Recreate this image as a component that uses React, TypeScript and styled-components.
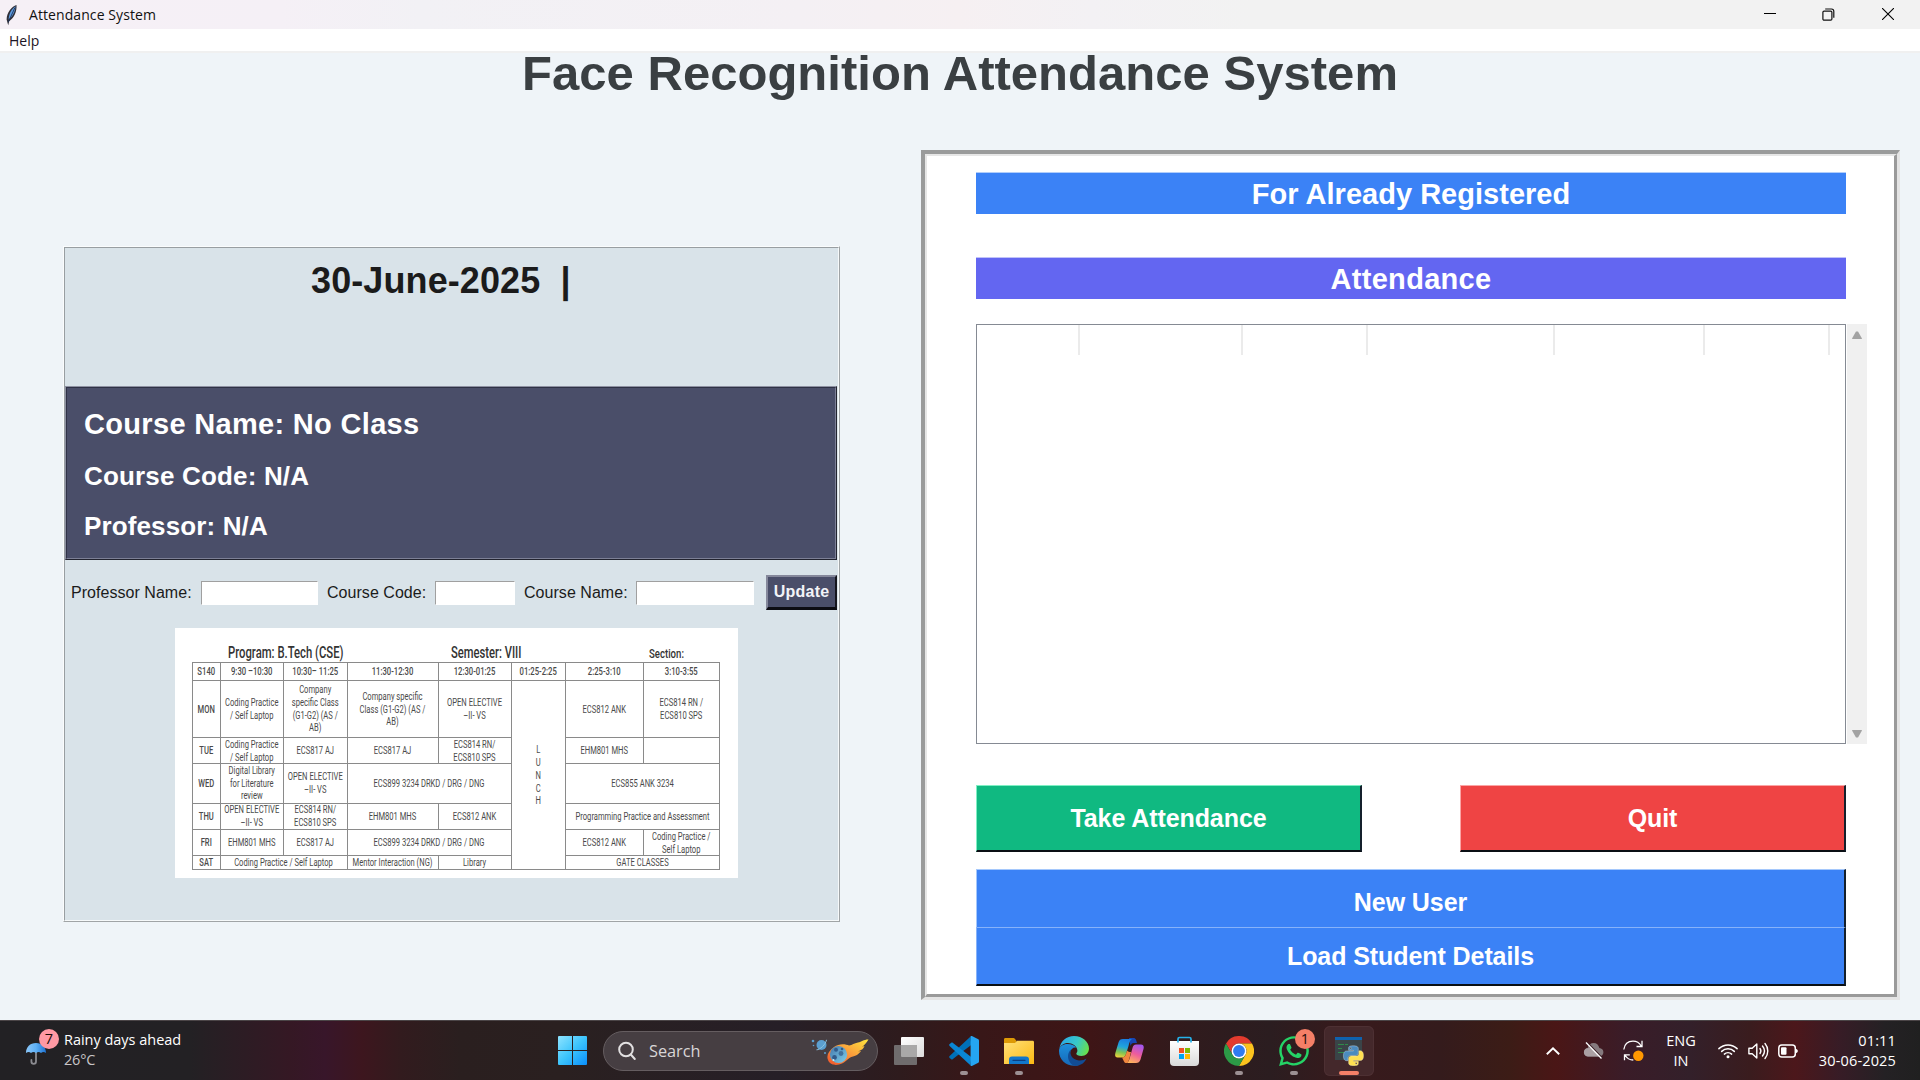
import React from "react";
import styled, { createGlobalStyle } from "styled-components";
import { FaWhatsapp } from "react-icons/fa";

const ARIAL = `"Liberation Sans", Arial, sans-serif`;
const SEGOE = `"Open Sans", "Noto Sans", sans-serif`;

const GlobalStyle = createGlobalStyle`
  * { box-sizing: border-box; }
  html, body { margin: 0; padding: 0; }
  body { background: #eff4f9; overflow: hidden; }
  button { margin: 0; padding: 0; }
`;

const Screen = styled.div`
  width: 1920px;
  height: 1080px;
  display: flex;
  flex-direction: column;
  overflow: hidden;
  background: #eff4f8;
  font-family: ${ARIAL};
`;

/* ---------- window chrome ---------- */

const TitleBar = styled.header`
  height: 29px;
  flex: none;
  display: flex;
  align-items: center;
  padding-left: 4px;
  background: linear-gradient(90deg, #f6f0f6 0, #f5f0f6 280px, #f2f1f5 420px, #f4f0f4 800px, #f6f0f2 960px, #f3f1f4 1090px, #f2f2f2 1250px);
`;

const WindowTitle = styled.span`
  flex: 1;
  margin-left: 10px;
  font: 400 14px/28px ${SEGOE};
  letter-spacing: 0.08px;
  color: #111;
`;

const WindowControls = styled.div`
  display: flex;
  height: 29px;
  padding-right: 1px;
`;

const ControlButton = styled.div<{ $w: number }>`
  width: ${(p) => p.$w}px;
  height: 28px;
  display: flex;
  align-items: center;
  justify-content: center;
`;

const MenuBar = styled.nav`
  height: 24px;
  flex: none;
  padding-left: 9px;
  background: #fff;
  border-bottom: 2px solid #f0f0f0;
  font: 400 14px/24px ${SEGOE};
  color: #1c1424;
`;

/* ---------- application body ---------- */

const Heading = styled.h1`
  margin: 0;
  height: 39px;
  flex: none;
  text-align: center;
  white-space: nowrap;
  font: 700 49px/40px ${ARIAL};
  letter-spacing: 0.03px;
  color: #3a3f42;
`;

const Body = styled.main`
  flex: 1;
  min-height: 0;
  display: flex;
  align-items: flex-start;
  padding: 58px 0 0 63px;
`;

const LeftPanel = styled.section`
  width: 777px;
  height: 676px;
  margin-top: 96px;
  border: 1px solid;
  border-color: #fafcfd #a0a4a6 #a0a4a6 #fafcfd;
`;

const LeftInner = styled.div`
  height: 100%;
  display: flex;
  flex-direction: column;
  padding-right: 1px;
  background: #d9e3e9;
  border: 1px solid;
  border-color: #989ea2 #f6f9fa #f6f9fa #989ea2;
`;

const DateLine = styled.div`
  height: 138px;
  padding-top: 12px;
  text-align: center;
  white-space: pre;
  font: 700 36px/42px ${ARIAL};
  letter-spacing: 0.1px;
  color: #1b1b1b;
`;

const CourseBox = styled.div`
  height: 174px;
  border: 1px solid;
  border-color: #8f92a3 #22232f #22232f #8f92a3;
`;

const CourseInner = styled.div`
  height: 100%;
  padding: 18px 0 0 17px;
  background: #4a4e69;
  border: 1px solid;
  border-color: #2f3246 #7d8096 #7d8096 #2f3246;
  color: #fff;
`;

const CourseLine = styled.div<{ $size: number; $h: number; $ls: number }>`
  height: ${(p) => p.$h}px;
  font: 700 ${(p) => p.$size}px/36px ${ARIAL};
  letter-spacing: ${(p) => p.$ls}px;
`;

const FormRow = styled.form`
  height: 68px;
  display: flex;
  align-items: center;
  padding: 0 0 3px 6px;
`;

const FieldLabel = styled.label<{ $w: number }>`
  width: ${(p) => p.$w}px;
  flex: none;
  white-space: nowrap;
  font: 400 16px/20px ${ARIAL};
  letter-spacing: 0.04px;
  color: #1b1b1b;
`;

const Entry = styled.input<{ $w: number; $gap: number }>`
  width: ${(p) => p.$w}px;
  height: 24px;
  flex: none;
  margin: 0 ${(p) => p.$gap}px 0 0;
  padding: 0;
  background: #fff;
  border: 1px solid;
  border-color: #a0a0a0 #fff #fff #a0a0a0;
  border-radius: 0;
`;

const UpdateButton = styled.button`
  width: 71px;
  height: 35px;
  flex: none;
  background: #4a4e69;
  border: solid;
  border-width: 2px 2px 3px 2px;
  border-color: #85889b #15151d #0c0c12 #85889b;
  color: #f2f3f7;
  font: 700 16px/18px ${ARIAL};
  letter-spacing: 0.25px;
`;

/* ---------- timetable ---------- */

const Sheet = styled.div`
  width: 563px;
  height: 250px;
  margin-left: 110px;
  padding: 15px 18px 0 17px;
  background: #fff;
  font-family: Roboto, sans-serif;
  color: #4a4a4a;
`;

const SheetHead = styled.div`
  height: 19px;
  display: grid;
  grid-template-columns: 222px 198px 107px;
  align-items: center;
`;

const SheetTitle = styled.span<{ $left: number; $size: number }>`
  display: inline-block;
  padding-left: ${(p) => p.$left}px;
  white-space: nowrap;
  font-size: ${(p) => p.$size}px;
  font-weight: 500;
  line-height: 12px;
  color: #333;
  transform: translateY(1px) scaleY(1.4);
`;

const Grid = styled.div`
  width: 528px;
  height: 208px;
  display: grid;
  grid-template-columns: 27.5px 63.5px 63.5px 91px 73px 54.5px 77.5px 76.5px;
  grid-template-rows: 18px 57px 26px 39.5px 26.5px 26px 14px;
  border-top: 1px solid #8a8a8a;
  border-left: 1px solid #8a8a8a;
`;

const Cell = styled.div<{ $c: number; $span: number; $r: number; $rows: number; $head: boolean }>`
  grid-column: ${(p) => p.$c} / span ${(p) => p.$span};
  grid-row: ${(p) => p.$r} / span ${(p) => p.$rows};
  border-right: 1px solid #8a8a8a;
  border-bottom: 1px solid #8a8a8a;
  display: flex;
  align-items: center;
  justify-content: center;
  min-height: 0;
  min-width: 0;
  font-weight: ${(p) => (p.$head ? 500 : 400)};
`;

const CellText = styled.span<{ $size: number }>`
  white-space: pre;
  text-align: center;
  font-size: ${(p) => p.$size}px;
  line-height: 8.9px;
  transform: translateY(1px) scaleY(1.42);
`;

type CellSpec = [row: number, col: number, text: string, span?: number, rows?: number];

const cells: CellSpec[] = [
  [1, 1, "S140"], [1, 2, "9:30 –10:30"], [1, 3, "10:30– 11:25"], [1, 4, "11:30-12:30"],
  [1, 5, "12:30-01:25"], [1, 6, "01:25-2:25"], [1, 7, "2:25-3:10"], [1, 8, "3:10-3:55"],
  [2, 1, "MON"], [2, 2, "Coding Practice\n/ Self Laptop"], [2, 3, "Company\nspecific Class\n(G1-G2) (AS /\nAB)"],
  [2, 4, "Company specific\nClass (G1-G2) (AS /\nAB)"], [2, 5, "OPEN ELECTIVE\n–II- VS"],
  [2, 6, "L\nU\nN\nC\nH", 1, 6], [2, 7, "ECS812 ANK"], [2, 8, "ECS814 RN /\nECS810 SPS"],
  [3, 1, "TUE"], [3, 2, "Coding Practice\n/ Self Laptop"], [3, 3, "ECS817 AJ"], [3, 4, "ECS817 AJ"],
  [3, 5, "ECS814 RN/\nECS810 SPS"], [3, 7, "EHM801 MHS"], [3, 8, ""],
  [4, 1, "WED"], [4, 2, "Digital Library\nfor Literature\nreview"], [4, 3, "OPEN ELECTIVE\n–II- VS"],
  [4, 4, "ECS899 3234 DRKD / DRG / DNG", 2], [4, 7, "ECS855 ANK 3234", 2],
  [5, 1, "THU"], [5, 2, "OPEN ELECTIVE\n–II- VS"], [5, 3, "ECS814 RN/\nECS810 SPS"], [5, 4, "EHM801 MHS"],
  [5, 5, "ECS812 ANK"], [5, 7, "Programming Practice and Assessment", 2],
  [6, 1, "FRI"], [6, 2, "EHM801 MHS"], [6, 3, "ECS817 AJ"], [6, 4, "ECS899 3234 DRKD / DRG / DNG", 2],
  [6, 7, "ECS812 ANK"], [6, 8, "Coding Practice /\nSelf Laptop"],
  [7, 1, "SAT"], [7, 2, "Coding Practice / Self Laptop", 2], [7, 4, "Mentor Interaction (NG)"],
  [7, 5, "Library"], [7, 7, "GATE CLASSES", 2],
];

const Timetable = () => (
  <Sheet>
    <SheetHead>
      <SheetTitle $left={36} $size={11.3}>Program: B.Tech (CSE)</SheetTitle>
      <SheetTitle $left={37} $size={11.2}>Semester: VIII</SheetTitle>
      <SheetTitle $left={37} $size={9.6}>Section:</SheetTitle>
    </SheetHead>
    <Grid>
      {cells.map(([r, c, text, span = 1, rows = 1]) => (
        <Cell key={`${r}-${c}`} $r={r} $c={c} $span={span} $rows={rows} $head={r === 1 || c === 1}>
          <CellText $size={r === 1 ? 7.7 : 7.6}>{text}</CellText>
        </Cell>
      ))}
    </Grid>
  </Sheet>
);

/* ---------- right panel ---------- */

const RightPanel = styled.section`
  width: 979px;
  height: 850px;
  margin-left: 81px;
  border: solid;
  border-width: 4px 3px 3px 4px;
  border-color: #9a9b9b #e4e4e4 #e4e4e4 #9a9b9b;
`;

const RightInner = styled.div`
  height: 100%;
  padding: 16px 0 0 49px;
  background: #fff;
  border: solid;
  border-width: 2px 3px 3px 2px;
  border-color: #e6e6e6 #9a9a9a #9a9a9a #e6e6e6;
`;

const Banner = styled.div<{ $bg: string; $gap: number; $ls: number }>`
  width: 870px;
  height: 42px;
  margin-bottom: ${(p) => p.$gap}px;
  background: ${(p) => p.$bg};
  border-top: 1px solid rgba(255, 255, 255, 0.6);
  color: #fff;
  text-align: center;
  font: 700 29px/43px ${ARIAL};
  letter-spacing: ${(p) => p.$ls}px;
`;

const TableArea = styled.div`
  display: flex;
  gap: 1px;
  height: 420px;
  margin-bottom: 41px;
`;

const Tree = styled.div`
  width: 870px;
  height: 420px;
  border: 1px solid #858a93;
  background: #fff;
`;

const TreeHead = styled.div`
  display: flex;
  height: 30px;
`;

const TreeColumn = styled.div<{ $w: number }>`
  width: ${(p) => p.$w}px;
  border-right: 2px solid #ebebeb;
`;

const ScrollBar = styled.div`
  width: 20px;
  background: #f0f0f0;
  display: flex;
  flex-direction: column;
  align-items: center;
  justify-content: space-between;
  padding: 7px 0 6px;
`;

const ButtonRow = styled.div`
  width: 870px;
  display: flex;
  justify-content: space-between;
  margin-bottom: 17px;
`;

const ActionButton = styled.button<{ $bg: string; $hi: string; $w: number; $h: number; $flat?: boolean }>`
  display: block;
  width: ${(p) => p.$w}px;
  height: ${(p) => p.$h}px;
  background: ${(p) => p.$bg};
  border: solid;
  border-width: 1px 2px ${(p) => (p.$flat ? 0 : 2)}px 1px;
  border-color: ${(p) => p.$hi} #14202c #0a0f14 ${(p) => p.$hi};
  padding-top: ${(p) => (p.$flat ? 6 : 0)}px;
  color: #fff;
  font: 700 25px/28px ${ARIAL};
  letter-spacing: -0.08px;
`;

/* ---------- taskbar ---------- */

const Taskbar = styled.footer`
  height: 60px;
  flex: none;
  display: flex;
  align-items: center;
  border-top: 1px solid #4b4547;
  background: linear-gradient(
    90deg, #222124 0, #232124 190px, #351824 290px, #38162a 325px, #3d161e 362px, #321b1e 400px,
    #2a1f1f 460px, #2a2020 560px, #261f27 780px, #2e1b1d 900px, #381718 980px, #3e1516 1090px, #301b1d 1190px,
    #2b1d20 1270px, #381a1c 1350px, #341b1c 1440px, #3c1c16 1510px, #4a1616 1556px, #3a1c28 1625px,
    #33202a 1690px, #3a1c1e 1750px, #4c171b 1795px, #371c26 1840px, #242124 1885px, #202020 1920px
  );
  font-family: ${SEGOE};
  color: #fff;
`;

const Weather = styled.div`
  width: 547px;
  display: flex;
  padding-left: 24px;
`;

const WeatherText = styled.div`
  margin-left: 2px;
  padding-top: 1px;
  font-size: 14.5px;
  line-height: 20px;
  letter-spacing: -0.02px;
`;

const Muted = styled.div`
  color: #c9c6c8;
  letter-spacing: -0.2px;
`;

const Start = styled.div`
  width: 56px;
  padding-left: 11px;
  display: flex;
`;

const SearchBox = styled.div`
  width: 275px;
  height: 40px;
  margin-right: 6px;
  display: flex;
  align-items: center;
  padding: 0 8px 0 13px;
  border: 1px solid #655d60;
  border-radius: 20px;
  background: #463e42;
`;

const SearchText = styled.span`
  flex: 1;
  margin-left: 12px;
  font-size: 16.3px;
  line-height: 22px;
  letter-spacing: 0;
  color: #d9d6d7;
`;

const AppSlot = styled.div<{ $active?: boolean }>`
  position: relative;
  width: 50px;
  height: 50px;
  margin: 0 5px 0 0;
  border-radius: 6px;
  display: flex;
  align-items: center;
  justify-content: center;
  background: ${(p) => (p.$active ? "#44282b" : "transparent")};
  box-shadow: ${(p) => (p.$active ? "inset 0 0 0 1px #4d3033" : "none")};
`;

const RunMark = styled.i<{ $w: number; $color: string }>`
  position: absolute;
  bottom: 1px;
  left: ${(p) => 25 - p.$w / 2}px;
  width: ${(p) => p.$w}px;
  height: 4px;
  border-radius: 2px;
  background: ${(p) => p.$color};
`;

const Badge = styled.b`
  position: absolute;
  top: 3px;
  left: 26px;
  width: 20px;
  height: 20px;
  border-radius: 50%;
  background: #f57f67;
  color: #1c0c0a;
  text-align: center;
  font: 400 14.5px/20px ${SEGOE};
`;

const WeatherIcon = styled.div`
  position: relative;
  width: 38px;
  height: 44px;
`;

const WeatherBadge = styled(Badge)`
  top: 0;
  left: 15px;
  background: #ff99a4;
`;

const Tray = styled.div`
  margin-left: auto;
  padding-right: 24px;
  display: flex;
  align-items: center;
`;

const TrayItem = styled.div<{ $w: number }>`
  width: ${(p) => p.$w}px;
  display: flex;
  justify-content: center;
`;

const TrayText = styled.div<{ $w: number; $align: string; $ls: number }>`
  width: ${(p) => p.$w}px;
  text-align: ${(p) => p.$align};
  white-space: nowrap;
  font-size: 14.5px;
  line-height: 20px;
  letter-spacing: ${(p) => p.$ls}px;
`;

/* ---------- icons ---------- */

const Feather = () => (
  <svg width="15" height="22" viewBox="0 0 15 22">
    <path d="M12.5 1C8 2.5 2.8 8 2.6 15.5l1.6 5.8 1-4.1C10 14 13 8 12.5 1z" fill="#2f2f38" />
    <path d="M11.5 2.2C8 4.500 5 9 4.600 15.500 8.500 12.500 11.300 7.500 11.500 2.200z" fill="#5d9be0" />
    <path d="M11 3.500L4.300 18" stroke="#1d3157" strokeWidth=".9" />
  </svg>
);

const Umbrella = () => (
  <svg width="28" height="44" viewBox="0 0 28 44">
    <defs>
      <linearGradient id="umb" x1="0" x2="1"><stop offset="0" stopColor="#8cc8fa" /><stop offset=".5" stopColor="#5fb0f5" /><stop offset="1" stopColor="#1d72d2" /></linearGradient>
    </defs>
    <path d="M12 22v10.500a2.300 2.300 0 0 1-4.600 0V31" fill="none" stroke="#8b8b90" strokeWidth="1.800" strokeLinecap="round" />
    <path d="M2 24C2 18 6 14 12 14S22 18 22 24c-1.800-1.400-3.500-1.400-5 0-1.500-1.400-3.200-1.400-5 0-1.800-1.400-3.500-1.400-5 0-1.500-1.400-3.200-1.400-5 0z" fill="url(#umb)" />
  </svg>
);

const WindowsLogo = () => (
  <svg width="29" height="29" viewBox="0 0 29 29">
    <defs>
      <linearGradient id="win" x1="0" y1="0" x2="1" y2="1"><stop offset="0" stopColor="#8fe4ff" /><stop offset=".5" stopColor="#3cc4fc" /><stop offset="1" stopColor="#0a8ffb" /></linearGradient>
    </defs>
    <path d="M1 0h13v14H0V1a1 1 0 0 1 1-1zM15 0h13a1 1 0 0 1 1 1v13H15zM0 15h14v14H1a1 1 0 0 1-1-1zM15 15h14v13a1 1 0 0 1-1 1H15z" fill="url(#win)" />
  </svg>
);

const Magnifier = () => (
  <svg width="20" height="20" viewBox="0 0 20 20" fill="none" stroke="#e2e0e1" strokeWidth="2" strokeLinecap="round">
    <circle cx="9" cy="8.500" r="6.800" />
    <path d="M13.800 13.500l4 4.500" />
  </svg>
);

const Comet = () => (
  <svg width="58" height="28" viewBox="0 0 58 28">
    <defs>
      <linearGradient id="fire" x1="0" y1="1" x2="1" y2="0"><stop offset="0" stopColor="#f0512b" /><stop offset=".45" stopColor="#f9953b" /><stop offset="1" stopColor="#ffe63d" /></linearGradient>
      <linearGradient id="rock" x1="0" y1="0" x2="1" y2="1"><stop offset="0" stopColor="#4378ad" /><stop offset="1" stopColor="#7fd0ea" /></linearGradient>
    </defs>
    <circle cx="10.500" cy="8" r="5" fill="#5b9fd0" />
    <path d="M5.500 12.800C9 13 15 7 15.500 2.800" stroke="#8cc4e0" fill="none" strokeWidth="1" />
    <circle cx="2" cy="4" r="1.300" fill="#5b9fd0" /><circle cx="2.500" cy="8.500" r=".8" fill="#5b9fd0" /><circle cx="14" cy="16" r="1" fill="#5b9fd0" />
    <path d="M57.500 2.500C52 2.500 51 5 47 5.500c-4 .5-5.500 2.700-9 3-3-1.500-10-2.500-15 1.500-5 4-8 8-6 13 2 5.500 9 6 14 3.500 4.500-2 6-6 11-7 4.500-1 6-3 8-5.500l-3 .5c4-1.500 5.500-3 6.500-5.500l-2.500.8C53.500 8 55.500 6 57.500 2.500z" fill="url(#fire)" />
    <circle cx="27.500" cy="17.500" r="8.600" fill="url(#rock)" />
    <circle cx="25" cy="12.800" r="2" fill="#315b8b" /><circle cx="30" cy="16.500" r="2.400" fill="#41719d" /><circle cx="23.500" cy="20.500" r="2.400" fill="#315b8b" /><circle cx="31" cy="12" r="1.300" fill="#315b8b" /><circle cx="22.500" cy="23" r="1" fill="#c9f0f8" />
  </svg>
);

const TaskView = () => (
  <svg width="30" height="28" viewBox="0 0 30 28">
    <defs><linearGradient id="tv" x1="0" y1="0" x2="1" y2="1"><stop offset="0" stopColor="#fff" /><stop offset="1" stopColor="#dcdcdc" /></linearGradient></defs>
    <rect x="7" y="0" width="23" height="20" rx="1" fill="url(#tv)" />
    <rect x="0" y="8" width="23" height="20" rx="1" fill="#6f6c6d" />
    <path d="M7 8h16v12H8a1 1 0 0 1-1-1z" fill="#a9a8a8" />
  </svg>
);

const VsCode = () => (
  <svg width="30" height="30" viewBox="0 0 100 100">
    <path d="M74 30L29 64 10 79 2 73c-2-2-2-4 0-6L72 2z" fill="#0070b8" />
    <path d="M74 70L10 21 2 27c-2 2-2 4 0 6l70 65z" fill="#0a86d4" />
    <path d="M72 99V1c2-1.500 4-1 6-.2l18 9c3 1.500 4 3.500 4 6.200v68c0 2.700-1 4.700-4 6.200l-18 9c-2 .8-4 1.300-6-.2z" fill="#25a5f2" />
  </svg>
);

const Folder = () => (
  <svg width="30" height="28" viewBox="0 0 30 28">
    <defs><linearGradient id="fol" x1="0" y1="0" x2="1" y2="1"><stop offset="0" stopColor="#ffe17a" /><stop offset="1" stopColor="#fcb913" /></linearGradient></defs>
    <path d="M1.500 1h8c1 0 2 1.800 3 2.800L11 9H0V2.500C0 1.500.5 1 1.500 1z" fill="#dd9a06" />
    <path d="M0 6h11l2-2.200h15.500c1 0 1.500.5 1.500 1.500V27H0z" fill="url(#fol)" />
    <path d="M5 27v-4.500a3 3 0 0 1 3-3h14a3 3 0 0 1 3 3V27z" fill="#1277cb" />
    <path d="M9 23.300h12" stroke="#0a3f83" strokeWidth="1.300" strokeLinecap="round" />
  </svg>
);

const Edge = () => (
  <svg width="30" height="30" viewBox="0 0 30 30">
    <defs>
      <linearGradient id="e1" x1="0" y1=".3" x2="1" y2=".6"><stop offset="0" stopColor="#2aa8e8" /><stop offset=".55" stopColor="#38c8c8" /><stop offset="1" stopColor="#68e04c" /></linearGradient>
      <linearGradient id="e2" x1="0" y1="0" x2="0" y2="1"><stop offset="0" stopColor="#1d90dc" /><stop offset="1" stopColor="#1668b8" /></linearGradient>
    </defs>
    <path d="M.3 13C1.500 5 7.500 0 15 0c8.500 0 15 6 15 12.500 0 4.500-3.300 7.500-7.500 7.500-3.300 0-5.200-1.200-5.200-2.200 0-.9 1.100-1.200 1.100-3.300C18.400 10 13 7 9 7 4.500 7 1.500 9.500.3 13z" fill="url(#e1)" />
    <path d="M0 15C0 10.500 4 8 8.500 8c4 0 7 1.500 8.700 3.500-2.700-.6-5.700 1.500-6.200 5C10.500 22 14 27 19 29.500 9 31.500 0 25 0 15z" fill="url(#e2)" />
    <path d="M12 13.500C10 19 14 24 20 24.500c3 .2 5.500-.8 7.500-2C26 26 22.500 29.500 17 30 10 29.500 6 19 12 13.500z" fill="#124c94" />
  </svg>
);

const Copilot = () => (
  <svg width="29" height="26" viewBox="0 0 29 26">
    <defs>
      <linearGradient id="c1" x1=".4" y1="0" x2=".2" y2="1"><stop offset="0" stopColor="#1a7fe0" /><stop offset=".4" stopColor="#20a5dc" /><stop offset=".7" stopColor="#7cc454" /><stop offset="1" stopColor="#f4d23a" /></linearGradient>
      <linearGradient id="c2" x1=".7" y1="0" x2=".3" y2="1"><stop offset="0" stopColor="#a457ee" /><stop offset=".5" stopColor="#ee5c9c" /><stop offset="1" stopColor="#ffb45c" /></linearGradient>
    </defs>
    <path d="M14 0h4.500c2.500 0 2.700 2.500 3.500 5h-3.500c-1.500 0-2.300 1-3 3z" fill="#1746b5" />
    <path d="M8 1h9c-2 1-2.500 3-3.500 7L11 16c-.8 2.500-2 3.500-4 3.500H2.500C0 19.500-.3 17.500.5 14.500L3.500 4.500C4.300 2 5.500 1 8 1z" fill="url(#c1)" />
    <path d="M21 6.500h5c2.500 0 3.200 2 2.500 4.500l-3 10.500c-.8 2.500-2.200 3.500-4.500 3.500H11.500c2-1 2.600-2.500 3.500-6l2.500-9C18 7.700 19 6.500 21 6.500z" fill="url(#c2)" />
    <path d="M7 19.500c2 0 3.300-1 4-3.500l1-3.500c1 1 2.500 1.500 4 1.500l-1.500 6c-.8 3-1.500 5-3 5-2.500 0-2.500-2-4.500-5.500z" fill="#f0873f" />
  </svg>
);

const Store = () => (
  <svg width="29" height="30" viewBox="0 0 29 30">
    <defs><linearGradient id="st" x1="0" y1="0" x2="0" y2="1"><stop offset="0" stopColor="#fff" /><stop offset="1" stopColor="#d9d9d9" /></linearGradient></defs>
    <path d="M8 6.500V3a1.500 1.500 0 0 1 1.500-1.500h10A1.500 1.500 0 0 1 21 3v3.500" fill="none" stroke="#26b2ea" strokeWidth="1.700" />
    <path d="M0 5h29v21a4 4 0 0 1-4 4H4a4 4 0 0 1-4-4z" fill="url(#st)" />
    <path d="M8 5v1.500M21 5v1.500" stroke="#26b2ea" strokeWidth="1.700" />
    <path d="M9 12h5v5H9z" fill="#f25022" /><path d="M15 12h5v5h-5z" fill="#7fba00" />
    <path d="M9 18h5v5H9z" fill="#00a4ef" /><path d="M15 18h5v5h-5z" fill="#ffb900" />
  </svg>
);

const Chrome = () => (
  <svg width="30" height="30" viewBox="0 0 48 48">
    <path d="M3.200 12A24 24 0 0 1 44.800 12H24A12 12 0 0 0 13.600 30z" fill="#e33b2e" />
    <path d="M44.800 12A24 24 0 0 1 24 48L34.400 30A12 12 0 0 0 24 12z" fill="#fcc31e" />
    <path d="M24 48A24 24 0 0 1 3.200 12L13.600 30A12 12 0 0 0 34.400 30z" fill="#2c9a46" />
    <circle cx="24" cy="24" r="12" fill="#fff" />
    <circle cx="24" cy="24" r="9.500" fill="#2f7bf0" />
  </svg>
);

const PY =
  "M14.25.18l.9.2.73.26.59.3.45.32.34.34.25.34.16.33.1.3.04.26.02.2-.01.13V8.500l-.05.63-.13.55-.21.46-.26.38-.3.31-.33.25-.35.19-.35.14-.33.1-.3.07-.26.04-.21.02H8.770l-.69.05-.59.14-.5.22-.41.27-.33.32-.27.35-.2.36-.15.37-.1.35-.07.32-.04.27-.02.21v3.060H3.170l-.21-.03-.28-.07-.32-.12-.35-.18-.36-.26-.36-.36-.35-.46-.32-.59-.28-.73-.21-.88-.14-1.050-.05-1.230.06-1.220.16-1.040.24-.87.32-.71.36-.57.4-.44.42-.33.42-.24.4-.16.36-.1.32-.05.24-.01h.16l.06.01h8.160v-.83H6.180l-.01-2.750-.02-.37.05-.34.11-.31.17-.28.25-.26.31-.23.38-.2.44-.18.51-.15.58-.12.64-.1.71-.06.77-.04.84-.02 1.270.05zm-6.300 1.980l-.23.33-.08.41.08.41.23.34.33.22.41.09.41-.09.33-.22.23-.34.08-.41-.08-.41-.23-.33-.33-.22-.41-.09-.41.09z";

const PythonApp = () => (
  <svg width="30" height="30" viewBox="0 0 30 30">
    <rect x="1" y="1" width="27" height="23" fill="#3a4448" />
    <rect x="1" y="1" width="27" height="3" fill="#0f62ae" />
    <path d="M4 8.500h6M11 8.500h3M4 12.500h4M4 16.500h6" stroke="#2e8b4a" strokeWidth="1.200" />
    <g transform="translate(9.500 9.800) scale(.83)">
      <path d={PY} fill="#4b8bbe" stroke="#d3e2ec" strokeWidth=".5" />
      <path d={PY} fill="#ffe052" stroke="#f4ecc0" strokeWidth=".5" transform="rotate(180 12 12)" />
    </g>
  </svg>
);

const Chevron = () => (
  <svg width="14" height="8" viewBox="0 0 14 8" fill="none" stroke="#fff" strokeWidth="1.900"><path d="M.8 7.200L7 1.300l6.200 5.900" /></svg>
);

const CloudOff = () => (
  <svg width="21" height="17" viewBox="0 0 21 17">
    <path d="M5 14.500A4.300 4.300 0 0 1 4.600 6C5.500 2.800 7.800 1 10.600 1c3 0 5 1.900 5.800 5 2.300.2 4 1.900 4 4.200 0 2.500-1.800 4.300-4.400 4.300z" fill="#857a7e" />
    <path d="M5 14.500c-6-.8-5-8.500 0-8.300 3-1 4.500 1 7 4l4 4.300z" fill="#aaa0a3" />
    <path d="M4 .2l15 15.500" stroke="#3a1c24" strokeWidth="1.500" /><path d="M3 .5l15.500 16" stroke="#fff" strokeWidth="1.300" />
  </svg>
);

const Sync = () => (
  <svg width="21" height="21" viewBox="0 0 21 21" fill="none" stroke="#fff" strokeWidth="1.300">
    <path d="M.8 9.500C1.500 4.500 5 1.200 10 1.200c3.500 0 6.500 1.800 8.200 4.800M19 .8v5.700h-5.500" />
    <path d="M1.500 20.300v-5.500h5.300M2.300 15.500c1.700 2.900 4.700 4.500 8 4.500" />
    <circle cx="15.300" cy="15.700" r="5.200" fill="#ff9800" stroke="none" />
  </svg>
);

const Wifi = () => (
  <svg width="20" height="16" viewBox="0 0 20 16" fill="none" stroke="#fff" strokeWidth="1.500" strokeLinecap="round">
    <path d="M.9 5.600a13 13 0 0 1 18.200 0M3.700 8.400a9 9 0 0 1 12.600 0M6.400 11.100a5.200 5.200 0 0 1 7.200 0" />
    <circle cx="10" cy="13.700" r="1.500" fill="#fff" stroke="none" />
  </svg>
);

const Speaker = () => (
  <svg width="21" height="18" viewBox="0 0 21 18" fill="none" stroke="#fff" strokeWidth="1.400" strokeLinejoin="round" strokeLinecap="round">
    <path d="M.9 6.200h3.300L8.800 2v14l-4.600-4.200H.9z" />
    <path d="M12 6.500c1.100 1.500 1.100 3.500 0 5M14.500 4c2.400 3 2.400 7 0 10M17 1.500c3.700 4.300 3.700 10.700 0 15" />
  </svg>
);

const Battery = () => (
  <svg width="20" height="14" viewBox="0 0 20 14">
    <rect x=".8" y="1" width="16.500" height="12" rx="3" fill="none" stroke="#fff" strokeWidth="1.500" />
    <rect x="3" y="3.200" width="5.500" height="7.600" rx="1" fill="#fff" />
    <path d="M18 5c2.400.3 2.400 3.700 0 4z" fill="#fff" />
  </svg>
);

const ArrowUp = () => (
  <svg width="10" height="8" viewBox="0 0 10 8"><path d="M0 7.500L4 .5h2l4 7c0 .3-.2.500-.5.5h-9C.2 8 0 7.800 0 7.500z" fill="#a3a3a3" /></svg>
);
const ArrowDown = () => (
  <svg width="10" height="8" viewBox="0 0 10 8"><path d="M0 .5L4 7.500h2l4-7C10 .2 9.800 0 9.500 0h-9C.2 0 0 .2 0 .5z" fill="#a3a3a3" /></svg>
);

const columns = [103, 163, 125, 187, 150, 125];

const apps: { name: string; icon: React.ReactNode; running?: boolean; active?: boolean; badge?: string }[] = [
  { name: "task-view", icon: <TaskView /> },
  { name: "vscode", icon: <VsCode />, running: true },
  { name: "folder", icon: <Folder />, running: true },
  { name: "edge", icon: <Edge /> },
  { name: "copilot", icon: <Copilot /> },
  { name: "store", icon: <Store /> },
  { name: "chrome", icon: <Chrome />, running: true },
  { name: "whatsapp", icon: <FaWhatsapp size={34} color="#25d366" />, running: true, badge: "1" },
  { name: "python", icon: <PythonApp />, active: true },
];

export default function App() {
  return (
    <Screen>
      <GlobalStyle />
      <TitleBar>
        <Feather />
        <WindowTitle>Attendance System</WindowTitle>
        <WindowControls>
          <ControlButton $w={58}>
            <svg width="12" height="12"><path d="M0 5.500h12" stroke="#000" /></svg>
          </ControlButton>
          <ControlButton $w={58}>
            <svg width="13" height="13" viewBox="0 0 13 13" fill="none" stroke="#111" strokeWidth="1.200">
              <rect x=".9" y="3.100" width="9" height="9" rx="1.200" />
              <path d="M3.200 1h6.300c1.500 0 2.300.8 2.300 2.300v6.500" />
            </svg>
          </ControlButton>
          <ControlButton $w={62}>
            <svg width="12" height="12"><path d="M0 0l12 12M12 0L0 12" stroke="#000" strokeWidth="1.100" /></svg>
          </ControlButton>
        </WindowControls>
      </TitleBar>
      <MenuBar>Help</MenuBar>

      <Heading>Face Recognition Attendance System</Heading>
      <Body>
        <LeftPanel>
          <LeftInner>
            <DateLine>{"30-June-2025  |  "}</DateLine>
            <CourseBox>
              <CourseInner>
                <CourseLine $size={29} $h={52} $ls={0.32}>Course Name: No Class</CourseLine>
                <CourseLine $size={26} $h={50} $ls={0.17}>Course Code: N/A</CourseLine>
                <CourseLine $size={26} $h={36} $ls={0.13}>Professor: N/A</CourseLine>
              </CourseInner>
            </CourseBox>
            <FormRow>
              <FieldLabel $w={130}>Professor Name:</FieldLabel>
              <Entry $w={117} $gap={9} />
              <FieldLabel $w={108}>Course Code:</FieldLabel>
              <Entry $w={80} $gap={9} />
              <FieldLabel $w={112}>Course Name:</FieldLabel>
              <Entry $w={118} $gap={12} />
              <UpdateButton type="button">Update</UpdateButton>
            </FormRow>
            <Timetable />
          </LeftInner>
        </LeftPanel>

        <RightPanel>
          <RightInner>
            <Banner $bg="#3b82f6" $gap={43} $ls={0.02}>For Already Registered</Banner>
            <Banner $bg="#6366f1" $gap={25} $ls={0.3}>Attendance</Banner>
            <TableArea>
              <Tree>
                <TreeHead>
                  {columns.map((w, i) => (
                    <TreeColumn key={i} $w={w} />
                  ))}
                </TreeHead>
              </Tree>
              <ScrollBar>
                <ArrowUp />
                <ArrowDown />
              </ScrollBar>
            </TableArea>
            <ButtonRow>
              <ActionButton $bg="#10b981" $hi="#7ff0c4" $w={386} $h={67}>Take Attendance</ActionButton>
              <ActionButton $bg="#ef4444" $hi="#fba5a5" $w={386} $h={67}>Quit</ActionButton>
            </ButtonRow>
            <ActionButton $bg="#3b82f6" $hi="#a5c8fc" $w={870} $h={58} $flat>New User</ActionButton>
            <ActionButton $bg="#3b82f6" $hi="#86b2fa" $w={870} $h={59}>Load Student Details</ActionButton>
          </RightInner>
        </RightPanel>
      </Body>

      <Taskbar>
        <Weather>
          <WeatherIcon>
            <Umbrella />
            <WeatherBadge>7</WeatherBadge>
          </WeatherIcon>
          <WeatherText>
            <div>Rainy days ahead</div>
            <Muted>26°C</Muted>
          </WeatherText>
        </Weather>
        <Start>
          <WindowsLogo />
        </Start>
        <SearchBox>
          <Magnifier />
          <SearchText>Search</SearchText>
          <Comet />
        </SearchBox>
        {apps.map((a) => (
          <AppSlot key={a.name} $active={a.active}>
            {a.icon}
            {a.running && <RunMark $w={8} $color="#9c9093" />}
            {a.active && <RunMark $w={20} $color="#f57f67" />}
            {a.badge && <Badge>{a.badge}</Badge>}
          </AppSlot>
        ))}
        <Tray>
          <TrayItem $w={32}><Chevron /></TrayItem>
          <TrayItem $w={48}><CloudOff /></TrayItem>
          <TrayItem $w={32}><Sync /></TrayItem>
          <TrayText $w={64} $align="center" $ls={0}>ENG<br />IN</TrayText>
          <TrayItem $w={30}><Wifi /></TrayItem>
          <TrayItem $w={30}><Speaker /></TrayItem>
          <TrayItem $w={30}><Battery /></TrayItem>
          <TrayText $w={93} $align="right" $ls={0.15}>01:11<br />30-06-2025</TrayText>
        </Tray>
      </Taskbar>
    </Screen>
  );
}
